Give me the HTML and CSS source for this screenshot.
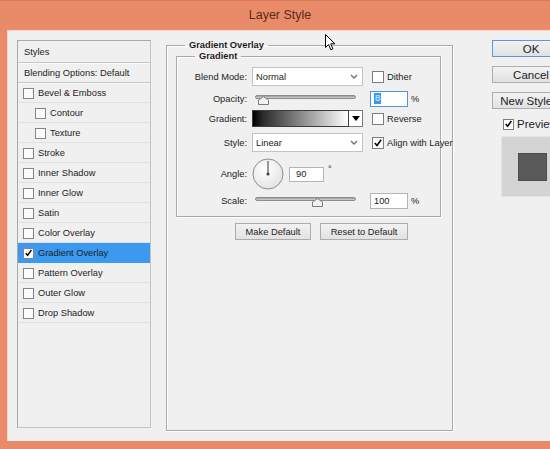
FILE: index.html
```html
<!DOCTYPE html>
<html>
<head>
<meta charset="utf-8">
<link rel="stylesheet" href="styles.css">
</head>
<body>
<div class="window">
  <div class="titlebar">Layer Style</div>
  <div class="client">
    <div class="styles-panel">
      <div class="sp-head">Styles</div>
      <div class="sp-blend">Blending Options: Default</div>
      <div class="sp-row"><span class="cb"></span>Bevel &amp; Emboss</div>
      <div class="sp-row sub"><span class="cb"></span>Contour</div>
      <div class="sp-row sub"><span class="cb"></span>Texture</div>
      <div class="sp-row"><span class="cb"></span>Stroke</div>
      <div class="sp-row"><span class="cb"></span>Inner Shadow</div>
      <div class="sp-row"><span class="cb"></span>Inner Glow</div>
      <div class="sp-row"><span class="cb"></span>Satin</div>
      <div class="sp-row"><span class="cb"></span>Color Overlay</div>
      <div class="sp-row active"><span class="cb"><svg viewBox="0 0 10 10" width="10" height="10"><path d="M2 5.2 L4 7.6 L8.2 1.8" fill="none" stroke="#000" stroke-width="1.7"/></svg></span>Gradient Overlay</div>
      <div class="sp-row"><span class="cb"></span>Pattern Overlay</div>
      <div class="sp-row"><span class="cb"></span>Outer Glow</div>
      <div class="sp-row"><span class="cb"></span>Drop Shadow</div>
    </div>

    <fieldset class="group outer">
      <legend>Gradient Overlay</legend>
      <fieldset class="group inner">
        <legend>Gradient</legend>
        <div class="rows">
          <div class="row r1">
            <span class="lbl">Blend Mode:</span>
            <div class="select"><span>Normal</span><svg class="chev" width="8" height="5" viewBox="0 0 8 5"><path d="M1 1 L4 4 L7 1" fill="none" stroke="#707070" stroke-width="1.3"/></svg></div>
            <div class="extra"><span class="chk"></span>Dither</div>
          </div>
          <div class="row r2">
            <span class="lbl">Opacity:</span>
            <div class="slider"><div class="track"></div><svg class="thumb" style="left:6px" width="11" height="9" viewBox="0 0 11 9"><path d="M0.5 8.5 L0.5 4 L5.5 0.6 L10.5 4 L10.5 8.5 Z" fill="#f2f2f2" stroke="#7a7a7a"/></svg></div>
            <div class="extra"><div class="num focus"><span class="sel">8</span></div><span class="unit">%</span></div>
          </div>
          <div class="row r3">
            <span class="lbl">Gradient:</span>
            <div class="gpick"><div class="gbar"></div><div class="gbtn"><svg width="8" height="5" viewBox="0 0 8 5"><path d="M0 0 L8 0 L4 5 Z" fill="#000"/></svg></div></div>
            <div class="extra"><span class="chk"></span>Reverse</div>
          </div>
          <div class="row r4">
            <span class="lbl">Style:</span>
            <div class="select"><span>Linear</span><svg class="chev" width="8" height="5" viewBox="0 0 8 5"><path d="M1 1 L4 4 L7 1" fill="none" stroke="#707070" stroke-width="1.3"/></svg></div>
            <div class="extra"><span class="chk"><svg viewBox="0 0 12 12" width="10" height="10"><path d="M2.2 6 L4.8 9 L9.8 2" fill="none" stroke="#000" stroke-width="2"/></svg></span>Align with Layer</div>
          </div>
          <div class="row r5">
            <span class="lbl">Angle:</span>
            <div class="anglebox">
              <svg class="dial" width="32" height="32" viewBox="0 0 32 32">
                <defs><radialGradient id="dg" cx="0.4" cy="0.35" r="0.7"><stop offset="0" stop-color="#ffffff"/><stop offset="1" stop-color="#e2e2e2"/></radialGradient></defs>
                <circle cx="16" cy="16" r="15" fill="url(#dg)" stroke="#8c8c8c"/>
                <line x1="16" y1="16" x2="16" y2="3" stroke="#3a3a3a" stroke-width="1"/>
                <circle cx="16" cy="16" r="1.5" fill="#3a3a3a"/>
              </svg>
              <div class="num angle">90</div>
              <span class="deg">°</span>
            </div>
          </div>
          <div class="row r6">
            <span class="lbl">Scale:</span>
            <div class="slider"><div class="track"></div><svg class="thumb" style="left:60px" width="11" height="9" viewBox="0 0 11 9"><path d="M0.5 8.5 L0.5 4 L5.5 0.6 L10.5 4 L10.5 8.5 Z" fill="#f2f2f2" stroke="#7a7a7a"/></svg></div>
            <div class="extra"><div class="num">100</div><span class="unit">%</span></div>
          </div>
        </div>
      </fieldset>
      <div class="btnrow">
        <div class="btn mk">Make Default</div>
        <div class="btn rs">Reset to Default</div>
      </div>
    </fieldset>

    <div class="side">
      <div class="sbtn ok">OK</div>
      <div class="sbtn">Cancel</div>
      <div class="sbtn">New Style...</div>
      <div class="prev"><span class="chk"><svg viewBox="0 0 12 12" width="10" height="10"><path d="M2.2 6 L4.8 9 L9.8 2" fill="none" stroke="#000" stroke-width="2"/></svg></span>Preview</div>
      <div class="pbox"><div class="psq"></div></div>
    </div>
  </div>
  <svg class="cursor" width="12" height="18" viewBox="0 0 12 18"><path d="M0.5 0.5 L0.5 13.5 L3.6 10.6 L5.9 15.8 L7.9 14.9 L5.7 9.8 L9.9 9.8 Z" fill="#fff" stroke="#000" stroke-width="1"/></svg>
</div>
</body>
</html>
```
FILE: styles.css
```css
* { box-sizing: border-box; }
html, body { margin: 0; padding: 0; }
body {
  width: 550px; height: 449px; overflow: hidden;
  font-family: "Liberation Sans", Arial, sans-serif;
  font-size: 9.3px; color: #1c1c1c;
}
.window {
  position: relative;
  width: 550px; height: 449px;
  background: #e98b69;
  border-top: 1px solid #d67756;
  display: flex; flex-direction: column;
  overflow: hidden;
}
.titlebar {
  height: 29px; flex: none;
  display: flex; align-items: center; justify-content: center;
  padding-left: 10px; padding-bottom: 2px;
  font-size: 12.5px; color: #5a2a1a;
}
.client {
  flex: 1;
  margin: 0 0 8px 7px;
  background: #f0f0f0;
  border-top: 1px solid #f6d5c7;
  border-left: 1px solid #f6d5c7;
  display: flex; align-items: flex-start;
  padding: 9px 0 0 9px;
  overflow: hidden;
}

/* styles list */
.styles-panel {
  flex: none;
  width: 134px; height: 388px;
  border: 1px solid #a8a8a8;
  border-right-color: #c4c4c4; border-bottom-color: #c4c4c4;
  background: #f0f0f0;
}
.sp-head, .sp-blend {
  padding-left: 6px;
  display: flex; align-items: center;
  border-bottom: 1px solid #c6c6c6;
  box-shadow: 0 1px 0 #fafafa;
}
.sp-head { height: 22px; }
.sp-blend { height: 20px; }
.sp-row {
  height: 20px;
  display: flex; align-items: center;
  padding-left: 5px;
  padding-top: 1px;
  border-bottom: 1px solid #e0e0e0;
}
.sp-row.sub { padding-left: 17px; }
.sp-row.active { background: #3b9af0; border-bottom-color: #3b9af0; }
.cb {
  width: 11px; height: 11px; flex: none;
  border: 1px solid #858585; background: #fbfbfb;
  margin-right: 4px;
  display: flex; align-items: center; justify-content: center;
}
.cb svg { display: block; }

/* group boxes */
.group {
  margin: 0; padding: 0; min-width: 0;
  border: 1px solid #a9a9a9;
  box-shadow: inset 1px 1px 0 #fff, 1px 1px 0 #fff;
}
.group legend {
  margin-left: 18px; padding: 0 4px;
  font-weight: bold; font-size: 9.3px; line-height: 11px;
  color: #1c1c1c;
}
.outer {
  flex: none;
  margin-left: 15px;
  width: 287px; height: 391px;
}
.inner {
  margin-left: 9px;
  width: 265px;
}
.rows { padding: 5px 0 7px 0; }
.row { display: flex; align-items: center; }
.r1 { height: 19px; }
.r2 { height: 17px; margin-top: 4px; }
.r3 { height: 17px; margin-top: 3px; }
.r4 { height: 19px; margin-top: 6px; }
.r5 { height: 32px; margin-top: 6px; }
.r6 { height: 17px; margin-top: 2px; }
.lbl {
  width: 70px; flex: none;
  text-align: right; margin-right: 5px;
  color: #222;
}
.select {
  width: 111px; height: 19px; flex: none;
  background: #fff; border: 1px solid #c3c3c3;
  display: flex; align-items: center; justify-content: space-between;
  padding: 0 4px 0 3px;
}
.chev { display: block; }
.extra {
  margin-left: 7px;
  display: flex; align-items: center;
  white-space: nowrap;
}
.chk {
  width: 12px; height: 12px; flex: none;
  margin-left: 2px; margin-right: 3px;
  border: 1px solid #7c7c7c; background: #fff;
  display: flex; align-items: center; justify-content: center;
}
.chk svg { display: block; }

.slider {
  position: relative;
  width: 111px; height: 17px; flex: none;
}
.track {
  margin: 5px 0 0 3px;
  width: 101px; height: 4px;
  border: 1px solid #8e8e8e; border-radius: 2px;
  background: linear-gradient(#9c9c9c, #d4d4d4);
}
.thumb { position: absolute; top: 6px; display: block; }

.num {
  width: 38px; height: 16px;
  background: #fff; border: 1px solid #b4b4b4;
  display: flex; align-items: center;
  padding-left: 3px;
}
.num.focus { border-color: #4f95dc; }
.sel { background: #3399ff; color: #e8f3ff; padding: 0 1px; line-height: 11px; }
.unit { margin-left: 3px; }

.gpick { width: 111px; height: 17px; flex: none; display: flex; }
.gbar {
  width: 97px; height: 17px;
  border: 1px solid #3c3c3c;
  background: linear-gradient(to right, #000 0%, #2a2a2a 10%, #fff 100%);
}
.gbtn {
  width: 14px; height: 17px;
  border: 1px solid #7a7a7a; border-left: none;
  background: #fff;
  display: flex; align-items: center; justify-content: center;
}
.gbtn svg { display: block; }

.anglebox { display: flex; align-items: center; }
.dial { display: block; }
.num.angle { width: 35px; height: 15px; margin-left: 5px; padding-left: 6px; }
.deg { margin-left: 4px; align-self: flex-start; margin-top: 6px; }

.btnrow {
  display: flex; gap: 9px;
  margin-top: 6px; padding-left: 68px;
}
.btn {
  height: 17px;
  border: 1px solid #acacac;
  background: linear-gradient(#f2f2f2, #e2e2e2);
  display: flex; align-items: center; justify-content: center;
}
.btn.mk { width: 76px; }
.btn.rs { width: 88px; }

/* right side */
.side {
  flex: none;
  margin-left: 39px;
  width: 80px;
  display: flex; flex-direction: column;
  font-size: 11.5px;
}
.sbtn {
  width: 78px; height: 17px;
  border: 1px solid #adadad;
  background: linear-gradient(#f2f2f2, #e1e1e1);
  display: flex; align-items: center; justify-content: center;
  margin-top: 9px;
  white-space: nowrap;
}
.sbtn.ok { margin-top: 0; border-color: #5b9ad6; }
.prev {
  display: flex; align-items: center;
  margin-top: 9px; margin-left: 9px;
  height: 12px;
}
.prev .chk { width: 11px; height: 11px; }
.pbox {
  margin-top: 6px; margin-left: 9px;
  width: 78px; height: 61px;
  background: #d4d4d4;
  border: 1px solid #e4e4e4;
  padding: 16px 0 0 16px;
}
.psq {
  width: 29px; height: 28px;
  background: #5a5a5a;
  border: 1px solid #4c4c4c;
}

.cursor { position: absolute; left: 325px; top: 33px; display: block; }
```
